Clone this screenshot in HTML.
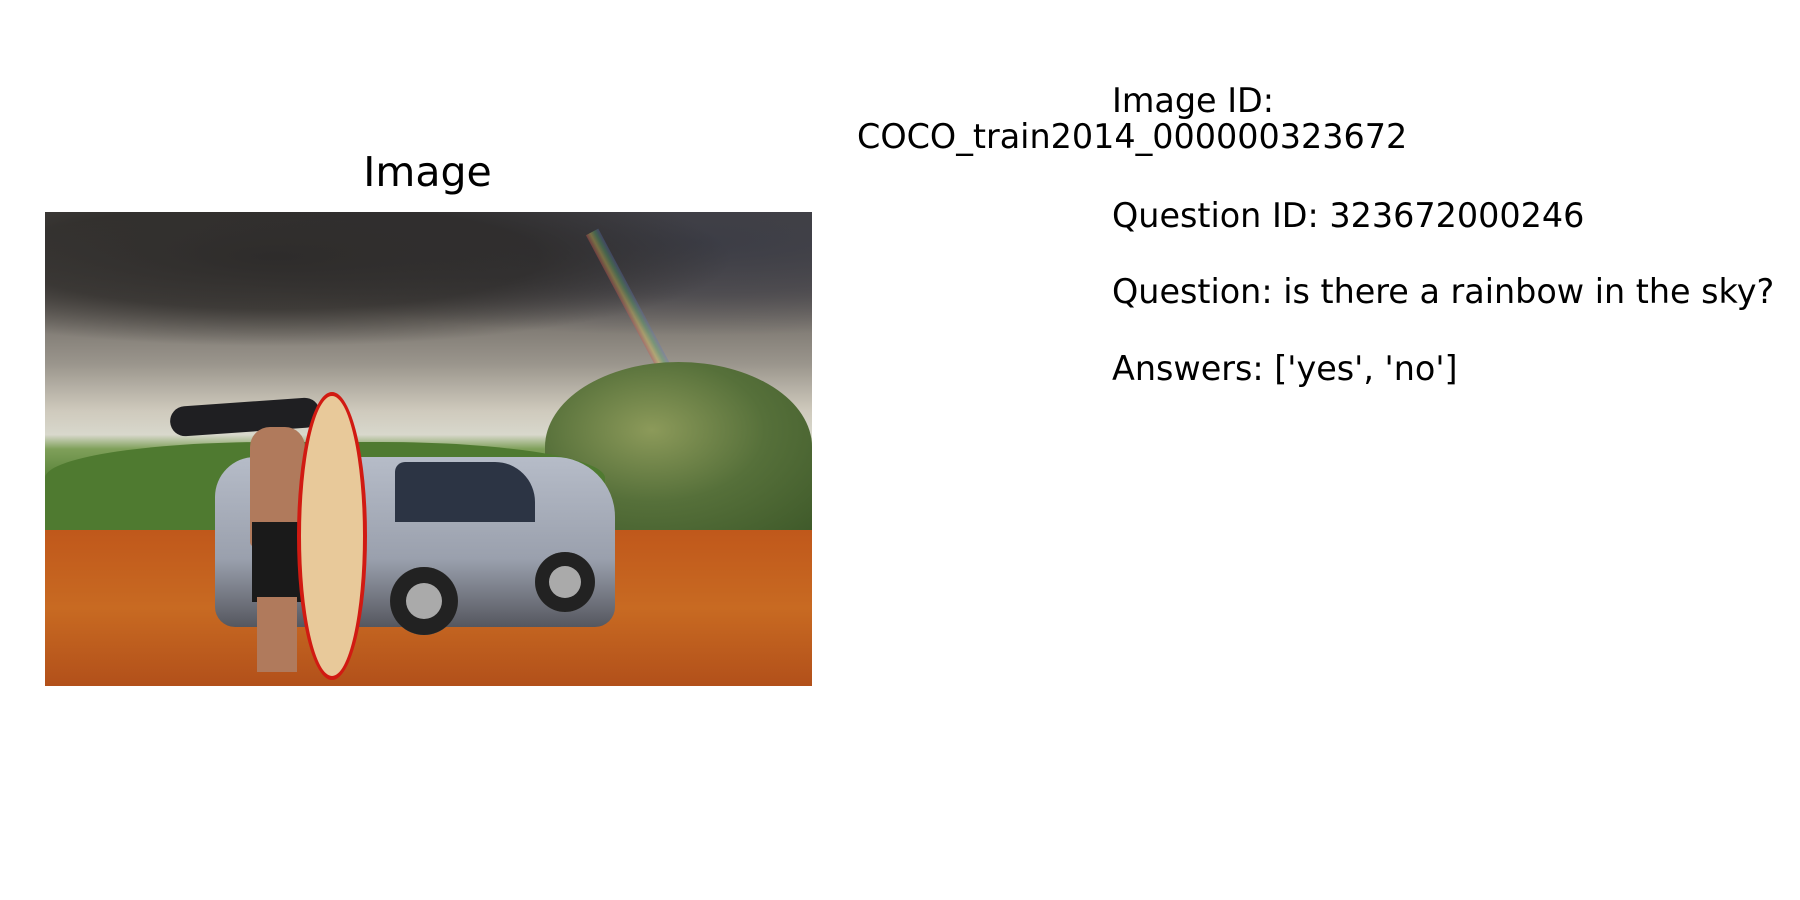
<!DOCTYPE html>
<html><head><meta charset="utf-8"><style>
html,body{margin:0;padding:0;background:#fff;width:1800px;height:900px;overflow:hidden;font-family:"DejaVu Sans","Liberation Sans",sans-serif;color:#000}
.t{position:absolute;white-space:nowrap}
#img{position:absolute;left:45px;top:212px;width:767px;height:474px;overflow:hidden;
background:linear-gradient(180deg,#4a4744 0%,#6b6661 18%,#9a958c 32%,#cfcabd 42%,#d8d8cc 47%,#7fa05a 50%,#4d7a2e 58%,#3f6b2a 64%,#b65a1e 66%,#c7621c 78%,#a8461a 100%)}
</style></head><body>
<div class="t" style="left:0;width:855px;text-align:center;top:148px;font-size:41px">Image</div>
<div id="img">
 <div style="position:absolute;left:0;top:0;width:767px;height:150px;background:radial-gradient(ellipse at 30% 30%,#2e2c2b 0%,rgba(40,38,36,0.7) 35%,rgba(0,0,0,0) 60%),radial-gradient(ellipse at 85% 20%,#3c3d46 0%,rgba(60,60,70,0.6) 30%,rgba(0,0,0,0) 55%)"></div>
 <div style="position:absolute;left:580px;top:10px;width:14px;height:170px;transform:rotate(-28deg);background:linear-gradient(90deg,rgba(200,80,80,.4),rgba(220,200,90,.4),rgba(90,170,110,.4),rgba(90,110,200,.3))"></div>
 <div style="position:absolute;left:500px;top:150px;width:267px;height:170px;border-radius:50% 50% 0 0;background:radial-gradient(ellipse at 40% 40%,#8c9a5a,#56703a 50%,#3f5a2a)"></div>
 <div style="position:absolute;left:0;top:230px;width:560px;height:90px;border-radius:40% 40% 0 0;background:#4f7a30"></div>
 <div style="position:absolute;left:0;top:318px;width:767px;height:156px;background:linear-gradient(180deg,#c0581b,#c86a22 50%,#b2501a)"></div>
 <div style="position:absolute;left:170px;top:245px;width:400px;height:170px;border-radius:40px 60px 20px 20px;background:linear-gradient(180deg,#b6bcc8,#9aa0ad 60%,#55575f)"></div>
 <div style="position:absolute;left:350px;top:250px;width:140px;height:60px;border-radius:10px 40px 0 0;background:#2c3444"></div>
 <div style="position:absolute;left:345px;top:355px;width:68px;height:68px;border-radius:50%;background:#222;box-shadow:inset 0 0 0 16px #222,inset 0 0 0 34px #aaa"></div>
 <div style="position:absolute;left:490px;top:340px;width:60px;height:60px;border-radius:50%;background:#222;box-shadow:inset 0 0 0 14px #222,inset 0 0 0 30px #aaa"></div>
 <div style="position:absolute;left:125px;top:190px;width:150px;height:30px;border-radius:20px;background:#1f1f22;transform:rotate(-4deg)"></div>
 <div style="position:absolute;left:205px;top:215px;width:55px;height:120px;border-radius:20px 20px 5px 5px;background:#b07a5c"></div>
 <div style="position:absolute;left:207px;top:310px;width:52px;height:80px;background:#1a1a1a"></div>
 <div style="position:absolute;left:212px;top:385px;width:40px;height:75px;background:#b07a5c"></div>
 <div style="position:absolute;left:252px;top:180px;width:62px;height:280px;border-radius:50%;background:#e8c99a;border:4px solid #d11a12"></div>
</div>
<div class="t" style="left:1112px;top:81px;font-size:33.4px">Image ID:</div>
<div class="t" style="left:857px;top:117px;font-size:33.4px">COCO_train2014_000000323672</div>
<div class="t" style="left:1112px;top:196px;font-size:33.4px">Question ID: 323672000246</div>
<div class="t" style="left:1112px;top:272px;font-size:33.4px">Question: is there a rainbow in the sky?</div>
<div class="t" style="left:1112px;top:349px;font-size:33.4px">Answers: ['yes', 'no']</div>
</body></html>
